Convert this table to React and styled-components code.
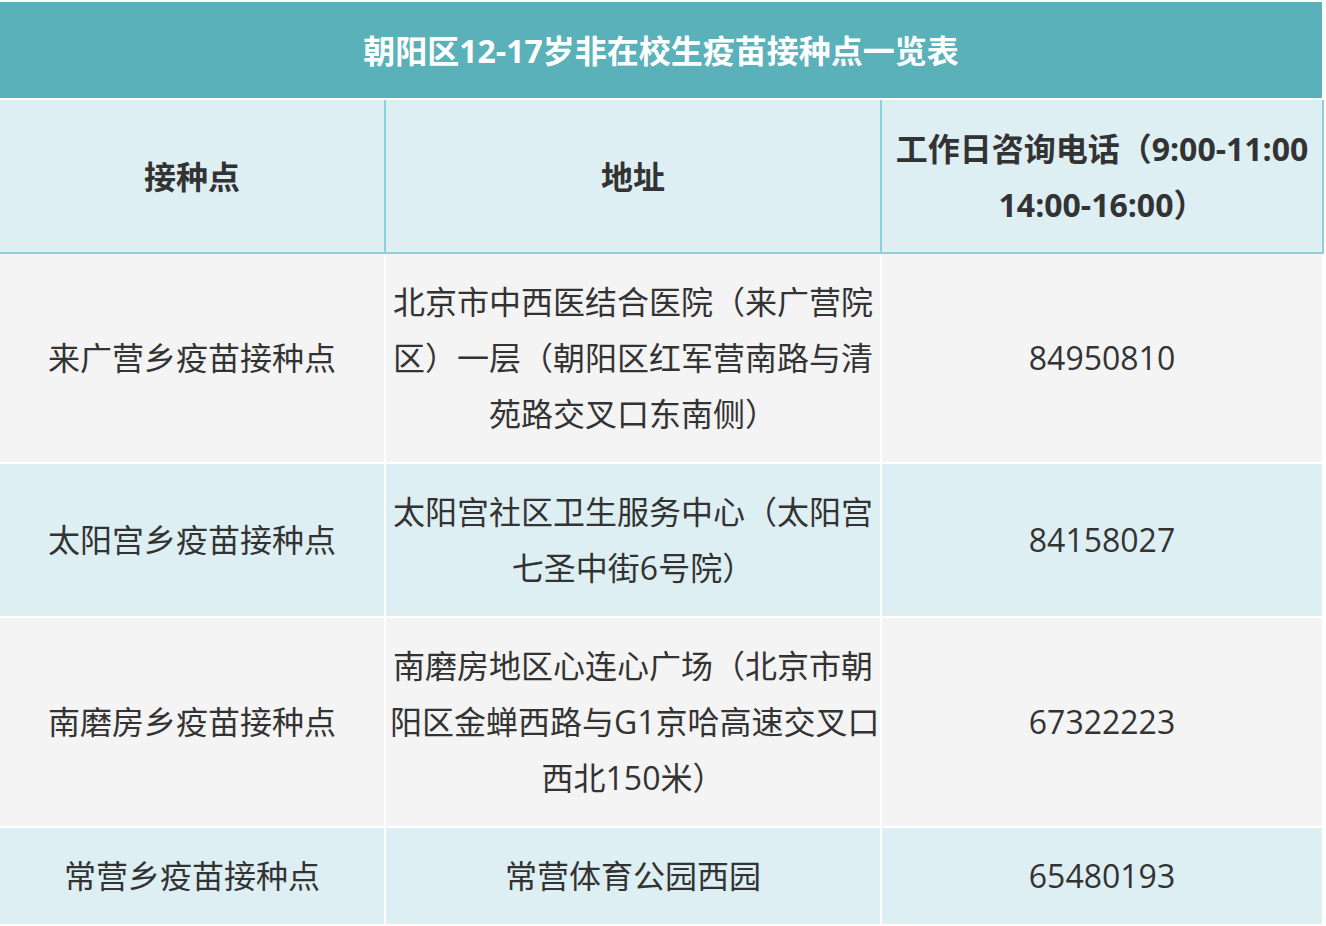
import React from 'react'
import styled, { createGlobalStyle } from 'styled-components'

const GlobalStyle = createGlobalStyle`
  html, body {
    margin: 0;
    padding: 0;
    background: #ffffff;
  }
  body {
    font-family: "Open Sans", "Noto Sans CJK SC", sans-serif;
    color: #333333;
  }
`

const Page = styled.div`
  padding-top: 2px;
`

const Table = styled.table`
  width: 1324px;
  table-layout: fixed;
  border-collapse: separate;
  border-spacing: 0;
`

const Cell = styled.td`
  box-sizing: border-box;
  padding: 20px 4px;
  font-size: 32px;
  line-height: 56px;
  text-align: center;
  vertical-align: middle;
  white-space: nowrap;
  border-right: 2px solid #ffffff;
  border-bottom: 2px solid #ffffff;
  background: ${props => (props.$alt ? '#ddeff3' : '#f4f4f4')};
`

const TitleCell = styled.th`
  box-sizing: border-box;
  padding: 21px 4px 19px;
  font-size: 32px;
  line-height: 56px;
  font-weight: 700;
  color: #ffffff;
  background: #5bb1ba;
  border-right: 2px solid #ffffff;
  border-bottom: 2px solid #ffffff;
`

const HeadCell = styled.th`
  box-sizing: border-box;
  padding: 21px 4px 19px;
  font-size: 32px;
  line-height: 56px;
  font-weight: 700;
  text-align: center;
  white-space: nowrap;
  background: #ddeff3;
  border-right: 2px solid #8dcfdd;
  border-bottom: 2px solid #8dcfdd;
`

const rows = [
  {
    name: '来广营乡疫苗接种点',
    address: ['北京市中西医结合医院（来广营院', '区）一层（朝阳区红军营南路与清', '苑路交叉口东南侧）'],
    phone: '84950810',
  },
  {
    name: '太阳宫乡疫苗接种点',
    address: ['太阳宫社区卫生服务中心（太阳宫', '七圣中街6号院）'],
    phone: '84158027',
  },
  {
    name: '南磨房乡疫苗接种点',
    address: ['南磨房地区心连心广场（北京市朝', '阳区金蝉西路与G1京哈高速交叉口', '西北150米）'],
    phone: '67322223',
  },
  {
    name: '常营乡疫苗接种点',
    address: ['常营体育公园西园'],
    phone: '65480193',
  },
]

const Lines = ({ lines }) =>
  lines.map((line, i) => (
    <React.Fragment key={i}>
      {i > 0 && <br />}
      {line}
    </React.Fragment>
  ))

export default function App() {
  return (
    <Page>
      <GlobalStyle />
      <Table>
        <colgroup>
          <col style={{ width: 386 }} />
          <col style={{ width: 496 }} />
          <col style={{ width: 442 }} />
        </colgroup>
        <thead>
          <tr>
            <TitleCell colSpan={3}>朝阳区12-17岁非在校生疫苗接种点一览表</TitleCell>
          </tr>
          <tr>
            <HeadCell>接种点</HeadCell>
            <HeadCell>地址</HeadCell>
            <HeadCell>
              <Lines lines={['工作日咨询电话（9:00-11:00', '14:00-16:00）']} />
            </HeadCell>
          </tr>
        </thead>
        <tbody>
          {rows.map((row, i) => (
            <tr key={row.phone}>
              <Cell $alt={i % 2 === 1}>{row.name}</Cell>
              <Cell $alt={i % 2 === 1}>
                <Lines lines={row.address} />
              </Cell>
              <Cell $alt={i % 2 === 1}>{row.phone}</Cell>
            </tr>
          ))}
        </tbody>
      </Table>
    </Page>
  )
}
